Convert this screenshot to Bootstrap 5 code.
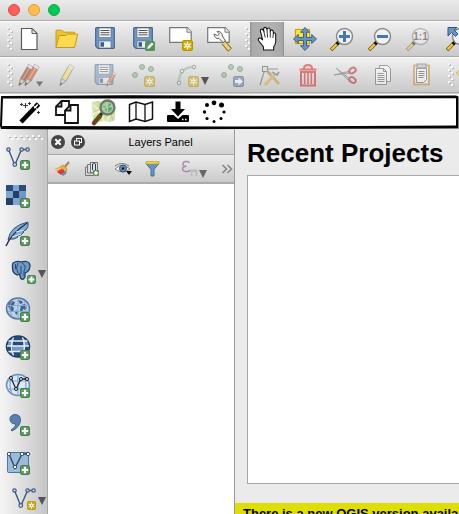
<!DOCTYPE html>
<html lang="en">
<head>
<meta charset="utf-8">
<meta name="viewport" content="width=device-width, initial-scale=1">
<title>QGIS</title>
<link href="https://cdn.jsdelivr.net/npm/bootstrap@5.3.0/dist/css/bootstrap.min.css" rel="stylesheet">
<style>
body { font-family: "Liberation Sans", Arial, sans-serif; background: #ebebeb; color: #000; }
.titlebar { height: 21px; padding-left: 8px; gap: 8px; background: linear-gradient(#ebebeb, #d4d4d4); border-bottom: 1px solid #adadad; }
.light { width: 12px; height: 12px; border: 1px solid; }
.light-close { background: #ff5f5b; border-color: #e2463f; }
.light-min { background: #ffbe4f; border-color: #e1a02f; }
.light-max { background: #00ca56; border-color: #12ac40; }
.toolrow { height: 36px; background: linear-gradient(#f0f0f0, #c9c9c9); border-top: 1px solid #fafafa; border-bottom: 1px solid #a9a9a9; }
.grip { width: 14px; height: 28px; margin-right: -4px; }
.tool { width: 38px; height: 34px; }
.tool-wide { width: 51px; padding-right: 2px !important; }
.tool svg, .side-tool svg, .plug svg, .mini svg { display: block; flex: none; overflow: visible; }
.tool, .side-tool, .plug, .mini, .round { border: 0; padding: 0; background: none; display: flex; align-items: center; justify-content: center; flex: none; }
.tool-on { background: linear-gradient(90deg, #8f8f8f 0, #a9a9a9 2px, #b4b4b4 50%, #a9a9a9 32px, #8f8f8f 34px) center / 34px 100% no-repeat; }
.faded svg { opacity: .5; }
.plugbar { height: 36px; padding: 0 0 0 11px; background: #fff; border-top: 1px solid #ccc; }
.plug { width: 37px; height: 32px; }
.frame { left: 0; top: 1px; width: 100%; height: 35px; pointer-events: none; }
.sidebar { width: 48px; padding-top: 6px; background: linear-gradient(90deg, #f4f4f4, #ededed 8px, #c6c6c6); border-right: 1px solid #a6a6a6; }
.side-tool { width: 47px; height: 38px; justify-content: flex-start; padding-left: 4px; }
.layers { width: 187px; border-right: 1px solid #999; }
.panel-head { height: 26px; padding: 0 4px 0 3px; gap: 6px; background: linear-gradient(#ececec, #d2d2d2); border-bottom: 1px solid #a8a8a8; }
.panel-title { font-size: 11px; line-height: 14px; }
.round { width: 14px; height: 14px; border-radius: 50%; background: #444; }
.panel-tools { height: 29px; background: linear-gradient(#ececec, #cacaca); border-bottom: 2px solid #aaa; }
.mini { width: 30px; height: 26px; }
.mini-wide { width: 48px; }
.mini-more { width: 22px; }
.welcome { padding: 8px 0 0 12px; }
.welcome h1 { font-size: 26px; line-height: 32px; padding-bottom: 6px; font-weight: 700; }
.projects { border: 1px solid #a8a8a8; border-right: 0; margin-bottom: 19px; }
.notice { height: 11px; margin-left: -12px; padding: 3px 0 0 8px; background: #dede00; font-size: 13px; line-height: 16px; }
</style>
<script src="https://cdn.jsdelivr.net/npm/bootstrap@5.3.0/dist/js/bootstrap.bundle.min.js"></script>
</head>
<body class="vh-100 overflow-hidden d-flex flex-column">

<svg class="d-none" aria-hidden="true">
  <symbol id="grip" viewBox="0 0 14 28">
    <g fill="#f8f8f8"><path d="M7 2h2v2H7zM10 5h2v2h-2zM7 8h2v2H7zM10 11h2v2h-2zM7 14h2v2H7zM10 17h2v2h-2zM7 20h2v2H7zM10 23h2v2h-2z"/></g>
    <g fill="#bcbcbc"><path d="M9 3h1v2H8V4h1zM12 6h1v2h-2V7h1zM9 9h1v2H8v-1h1zM12 12h1v2h-2v-1h1zM9 15h1v2H8v-1h1zM12 18h1v2h-2v-1h1zM9 21h1v2H8v-1h1zM12 24h1v2h-2v-1h1z"/></g>
  </symbol>
  <symbol id="plus" viewBox="0 0 10 10"><rect x=".5" y=".5" width="9" height="9" rx="1.5" fill="#5c9a5f" stroke="#468049"/><path d="M5 1.8v6.4M1.8 5h6.4" stroke="#fff" stroke-width="2.2"/></symbol>
  <symbol id="star" viewBox="0 0 11 11"><rect x=".5" y=".5" width="10" height="10" rx="1.5" fill="#d0a800" stroke="#b89200"/><path d="M5.500 1.500v8M2 3.500l7 4M9 3.500l-7 4" stroke="#fff" stroke-width="1.300"/><circle cx="5.500" cy="5.500" r="2" fill="#fff"/><circle cx="5.500" cy="5.500" r=".8" fill="#d0a800"/></symbol>
  <symbol id="disk" viewBox="0 0 20 22"><path d="M1.500.7h17q.8 0 .8.800v19q0 .8-.8.800H3L.7 19V1.500q0-.8.8-.8z" fill="#6f97c7" stroke="#43648d" stroke-width="1.200"/><rect x="4" y="1" width="12" height="9.500" fill="#f8f8f6" stroke="#58687a" stroke-width=".6"/><path d="M5.500 3.500h9M5.500 5.700h9M5.500 7.900h9" stroke="#555"/><rect x="4" y="14" width="12" height="7" fill="#f0f0ee" stroke="#58687a" stroke-width=".6"/><rect x="5.500" y="15.200" width="3.500" height="4.500" fill="#385c8c"/></symbol>
  <symbol id="lens" viewBox="0 0 28 28"><path d="M3 25l8-8" stroke="#5a5030" stroke-width="3.600"/><path d="M3.500 24.500l6-6" stroke="#fbc722" stroke-width="2.400"/><path d="M8.800 19.200l2.400-2.400" stroke="#111" stroke-width="3.400"/><circle cx="16.500" cy="11.500" r="8" fill="#f1f1f1" stroke="#8b8b8b" stroke-width="1.500"/></symbol>
  <symbol id="vee" viewBox="0 0 28 28"><path d="M4.500 4.500l6.300 15.500 6.800-15.500h6" fill="none" stroke="#3c5a80" stroke-width="1.400"/><g fill="#d5e2ef" stroke="#3c5a80" stroke-width="1.200"><circle cx="4.500" cy="4.500" r="1.700"/><circle cx="10.800" cy="19.500" r="1.800"/><circle cx="17.600" cy="4.500" r="1.700"/><circle cx="23.600" cy="4.500" r="1.700"/></g></symbol>
  <symbol id="points" viewBox="0 0 28 28"><g fill="#7fb587" stroke="#4f7f59"><circle cx="6" cy="14" r="2.500"/><circle cx="13" cy="6" r="2.500"/><circle cx="22" cy="8" r="2.500"/></g></symbol>
  <symbol id="pencil" viewBox="0 0 16 24"><path d="M1 22.500l1.500-7L10.500 1.500l4.500 2.600-8 14z" fill="currentColor" stroke="#68604b" stroke-width=".8"/><path d="M10.500 1.500l4.500 2.600-1.300 2.300-4.500-2.600z" fill="#ddd"/><path d="M4.700 16.500l7.500-13" stroke="#fff" stroke-opacity=".35" stroke-width="1.500"/><path d="M1 22.500l1.500-7 4.500 2.600z" fill="#d9d0bd" stroke="#555" stroke-width=".6"/><path d="M1 22.500l.6-3 1.900 1.100z" fill="#222"/></symbol>
  <symbol id="page" viewBox="0 0 24 16"><path d="M.7.7h17.500l4 4v10.600H.7z" fill="#fff" stroke="#777" stroke-width="1.200"/><path d="M18 .7v4.500h4.500" fill="#eee" stroke="#777"/></symbol>
</svg>

<header class="titlebar d-flex align-items-center flex-shrink-0">
  <button class="light light-close rounded-circle p-0" aria-label="Close window"></button>
  <button class="light light-min rounded-circle p-0" aria-label="Minimize window"></button>
  <button class="light light-max rounded-circle p-0" aria-label="Zoom window"></button>
</header>

<div class="toolrow d-flex align-items-center flex-shrink-0 overflow-hidden" role="toolbar" aria-label="Project and map navigation">
  <svg class="grip flex-shrink-0"><use href="#grip"/></svg>
  <button class="tool" aria-label="New project"><svg width="28" height="28"><path d="M6.500 3.500H17l5 5v16H6.500z" fill="#fff" stroke="#5b5b5b" stroke-width="1.200"/><path d="M17 3.500v5h5z" fill="#e8e8e8" stroke="#5b5b5b"/></svg></button>
  <button class="tool" aria-label="Open project"><svg width="28" height="28"><path d="M3 22V6q0-.8.800-.8h5l2 2h10q1 0 1 1V11" fill="#eec331" stroke="#c69a17"/><path d="M3 22.500L6 10.500h7l1.500-1.500h9.500q.8 0 .6.800L21.500 22.500z" fill="#fcd94f" stroke="#c69a17"/></svg></button>
  <button class="tool" aria-label="Save project"><svg width="28" height="28"><use href="#disk" x="4" y="2" width="20" height="22"/></svg></button>
  <button class="tool" aria-label="Save project as"><svg width="28" height="28"><use href="#disk" x="4" y="2" width="20" height="22"/><rect x="16" y="16" width="10" height="10" rx="1.500" fill="#589060"/><path d="M18.200 24l.6-2.500 4-4 1.700 1.700-4 4z" fill="#fff"/></svg></button>
  <button class="tool" aria-label="New print composer"><svg width="28" height="28"><use href="#page" x="2" y="2" width="24" height="16"/><use href="#star" x="15" y="15" width="11" height="11"/></svg></button>
  <button class="tool" aria-label="Composer manager"><svg width="28" height="28"><use href="#page" x="2" y="2" width="24" height="16"/><path d="M18.500 17.500l6.500 7.500" stroke="#7e6b32" stroke-width="5"/><path d="M18.500 17.500l6 7" stroke="#efd16c" stroke-width="3.400"/><path d="M12 6.500q5-.5 5.500 4.500l3 5-2.500 1.500-4-4q-4.500.5-5-4.500l3.500 1.500 2-1.500z" fill="#eee" stroke="#666"/></svg></button>
  <svg class="grip flex-shrink-0"><use href="#grip"/></svg>
  <button class="tool tool-on" aria-label="Pan map" aria-pressed="true"><svg width="28" height="28"><path d="M10.500 25v-3l-5-6.500q-.8-1.800.8-2.400 1.600-.3 3.400 2L7.300 6q-.2-1.500 1-1.800t1.900 1.100l.6.700-.2-2q.1-1.600 1.500-1.600T13.700 4l.3.300q.3-1.300 1.600-1.300t1.600 1.500l.1 1.300q.5-.9 1.600-.7t1.500 1.500v1.400q.6-.5 1.400-.1t.9 1.700V17q-.4 3-2 4.700V25z" fill="#fff" stroke="#161616" stroke-width="1.100"/><path d="M10.700 6l1.500 6.500M13.900 4.500l.7 8M17.300 6v6.500M20.400 8l-.5 5" stroke="#222" stroke-width=".9"/></svg></button>
  <button class="tool" aria-label="Pan map to selection"><svg width="28" height="28"><rect x="4.500" y="4.500" width="14" height="14" fill="#ffe23a" stroke="#d0a500" stroke-width="1.200"/><path d="M14 2.500l4.500 4.800h-3v5.200h5.200v-3l4.800 4.500-4.800 4.500v-3h-5.200v5.200h3L14 25.500l-4.500-4.800h3v-5.200H7.300v3L2.500 14l4.800-4.500v3h5.200V7.300h-3z" fill="#6295cb" stroke="#34577f" stroke-width=".9"/></svg></button>
  <button class="tool" aria-label="Zoom in"><svg width="28" height="28"><use href="#lens" x="-1"/><path d="M15.500 6v11M10 11.500h11" stroke="#4277b5" stroke-width="3"/></svg></button>
  <button class="tool" aria-label="Zoom out"><svg width="28" height="28"><use href="#lens" x="-1"/><path d="M10 11.500h11" stroke="#4277b5" stroke-width="3"/></svg></button>
  <button class="tool faded" aria-label="Zoom to native resolution"><svg width="28" height="28"><use href="#lens" x="-1"/><text x="15.500" y="15" text-anchor="middle" font-size="10" font-weight="700" fill="#333">1:1</text></svg></button>
  <button class="tool" aria-label="Zoom full"><svg width="28" height="28"><use href="#lens" x="1"/><path d="M5 2.500h9l-3 2.500 4 4-2.500 2.500-4-4L5 11z" fill="#6295cb" stroke="#34577f"/></svg></button>
</div>

<div class="toolrow d-flex align-items-center flex-shrink-0 overflow-hidden" role="toolbar" aria-label="Digitizing">
  <svg class="grip flex-shrink-0"><use href="#grip"/></svg>
  <button class="tool" aria-label="Current edits"><svg width="28" height="28"><g opacity=".6"><use href="#pencil" x="3" y="2" width="16" height="24" color="#a63c1e"/><use href="#pencil" x="9" y="2" width="16" height="24" color="#dc5426"/></g><path d="M21 20.500h7l-3.500 5z" fill="#777"/></svg></button>
  <button class="tool faded" aria-label="Toggle editing"><svg width="28" height="28"><use href="#pencil" x="5" y="2" width="18" height="24" color="#f0dc48"/></svg></button>
  <button class="tool faded" aria-label="Save layer edits"><svg width="28" height="28"><use href="#disk" x="3" y="3" width="20" height="21"/><use href="#pencil" x="15" y="10" width="11" height="16" color="#df5a20"/></svg></button>
  <button class="tool faded" aria-label="Add feature"><svg width="28" height="28"><use href="#points"/><use href="#star" x="15" y="15" width="11" height="11"/></svg></button>
  <button class="tool tool-wide" aria-label="Add circular string"><svg width="28" height="28"><g opacity=".5"><path d="M6 22Q6 6 21 6" fill="none" stroke="#88bb91" stroke-width="2.500"/><g fill="#eee" stroke="#666"><circle cx="6" cy="22" r="1.800"/><circle cx="9" cy="10" r="1.800"/><circle cx="21" cy="6" r="1.800"/></g><use href="#star" x="15" y="15" width="11" height="11"/></g><path d="M28 16h8l-4 8z" fill="#555"/></svg></button>
  <button class="tool faded" aria-label="Move feature"><svg width="28" height="28"><use href="#points"/><rect x="15.500" y="15.500" width="10" height="10" rx="1.500" fill="#587ba0" stroke="#36587e"/><path d="M17 19h3.500v-2.500L25 20.500l-4.500 4V22H17z" fill="#fff"/></svg></button>
  <button class="tool faded" aria-label="Node tool"><svg width="28" height="28"><path d="M4 24L9 8h13" fill="none" stroke="#555" stroke-width="1.200"/><rect x="6.500" y="5.500" width="5" height="5" fill="#ddd" stroke="#444"/><path d="M11 10l12 13" stroke="#c3922a" stroke-width="3"/><path d="M9 24l10-11" stroke="#d5a638" stroke-width="3"/><path d="M16 11l5 3 2-3" fill="none" stroke="#666" stroke-width="2"/><path d="M11 9l4 5" stroke="#777" stroke-width="1.500"/></svg></button>
  <button class="tool faded" aria-label="Delete selected"><svg width="28" height="28" fill="none" stroke="#d5130e"><path d="M5.500 8.500h17M10 7.500q0-3.500 4-3.500t4 3.500" stroke-width="2"/><path d="M7 11v13.500h14V11z" stroke-width="2"/><path d="M10.700 12v11M14 12v11M17.300 12v11" stroke-width="1.600"/></svg></button>
  <button class="tool faded" aria-label="Cut features"><svg width="28" height="28"><path d="M4 7l14 11-2 1zM2 14l16-4v2z" fill="#aaa" stroke="#555" stroke-width=".8"/><g fill="none" stroke="#b21c1c" stroke-width="2"><ellipse cx="20.500" cy="9.500" rx="3.500" ry="2.500" transform="rotate(-30 20.500 9.500)"/><ellipse cx="20.500" cy="19" rx="3.500" ry="2.500" transform="rotate(35 20.500 19)"/></g></svg></button>
  <button class="tool faded" aria-label="Copy features"><svg width="28" height="28" fill="#fff" stroke="#555"><path d="M9.500 4.500h8l3 3v13h-11z"/><path d="M5.500 7.500h8l3 3v13h-11z"/><path d="M13.500 7.500v3h3M7.500 12.500h6M7.500 14.500h7M7.500 16.500h7M7.500 18.500h7M7.500 20.500h7" fill="none"/></svg></button>
  <button class="tool faded" aria-label="Paste features"><svg width="28" height="28"><rect x="6" y="4.500" width="15" height="19" fill="#eee" stroke="#bd8320" stroke-width="1.800"/><path d="M8.500 7.500h10v11l-3 3h-7z" fill="#fff" stroke="#555"/><rect x="9" y="3" width="9" height="4" fill="#bbb" stroke="#666"/><path d="M10.500 10.500h6M10.500 12.500h6M10.500 14.500h6M10.500 16.500h5" stroke="#444"/></svg></button>
  <svg class="grip flex-shrink-0"><use href="#grip"/></svg>
  <button class="tool faded" aria-label="Labels"><svg width="28" height="28"><path d="M0 12l6-5h18v10H6z" fill="#f5d33c" stroke="#b89200"/></svg></button>
</div>

<div class="plugbar position-relative d-flex align-items-center flex-shrink-0" role="toolbar" aria-label="Plugins">
  <svg class="frame position-absolute" viewBox="0 0 459 35" preserveAspectRatio="none"><path d="M1 1L130 .3l130 .4 196-.2 2.500 1V33.500l-220 .5-120 .8L1 34 0 31zM3 3.500L2 31l230 .5 224-1V3.300L230 3.600z" fill="#050505" fill-rule="evenodd"/></svg>
  <button class="plug" aria-label="Quick wizard"><svg width="24" height="24"><path d="M3 22L17 7.500" stroke="#000" stroke-width="4.600"/><path d="M17.500 7l3-3" stroke="#000" stroke-width="5"/><path d="M16.300 8.200l3.500-3.700" stroke="#fff" stroke-width="1.500"/><path d="M7.500 3v5M5 5.500h5M3.500 3v3M2 4.500h3M11.500 2v3M10 3.500h3M20.500 11v3M19 12.500h3" stroke="#222" stroke-width=".9"/></svg></button>
  <button class="plug" aria-label="Duplicate"><svg width="26" height="26" fill="#fff" stroke="#111" stroke-width="1.800"><path d="M7.500 2H15v14H2V7.500z"/><path d="M7.500 2v5.500H2" fill="none"/><path d="M16.500 6H24v18H11V11.500z"/><path d="M16.500 6v5.500H11" fill="none"/></svg></button>
  <button class="plug" aria-label="OpenStreetMap search"><svg width="26" height="26"><path d="M1 3l6-1 6 1 6-1 5 1v18l-5 2-6-1-6 1-5-2z" fill="#c8e6a8"/><path d="M2 6l8 7 3 9M1 16l11-6 4-8M16 22l3-8 5-2" fill="none" stroke="#f6edc5" stroke-width="2"/><path d="M7 2l3 7-6 4M20 15l2 7" fill="none" stroke="#e6b39a"/><path d="M9 17l-6 7" stroke="#67491b" stroke-width="4.500" stroke-linecap="round"/><path d="M12 13l-2.500 3" stroke="#333" stroke-width="3"/><circle cx="16.500" cy="8.500" r="7" fill="#9fca94" stroke="#6d7a6e" stroke-width="2.300"/><path d="M12 7l4 1 3-4 2 6-4 4z" fill="#5faa6a"/><path d="M11 10l10-3M15 3l2 11" stroke="#bbdaca"/></svg></button>
  <button class="plug" aria-label="Map"><svg width="26" height="26" fill="none" stroke="#111" stroke-width="1.500"><path d="M1.500 5.500L8 3l9 2.500L24.500 3v17L17 22.500 8 20l-6.500 2.500z"/><path d="M8 3v17M17 5.500v17" stroke-width="1.300"/></svg></button>
  <button class="plug" aria-label="Download"><svg width="24" height="24"><path d="M9.500 1.500h5V9h4.500l-7 7.500L5 9h4.500z"/><path d="M2 15h5.500l4.500 4 4.500-4H22q1 0 1 1v5q0 1-1 1H2q-1 0-1-1v-5q0-1 1-1z"/><path d="M16 19.500h1.500M19 19.500h1.500" stroke="#fff" stroke-width="1.500"/></svg></button>
  <button class="plug" aria-label="Loading"><svg width="24" height="24"><circle cx="11" cy="2.800" r="2.400"/><circle cx="18.500" cy="5" r="2.500"/><circle cx="21" cy="12" r="1.600"/><circle cx="18" cy="18.500" r="1.500"/><circle cx="11" cy="21.500" r="1.500"/><circle cx="4" cy="18.500" r="1.600"/><circle cx="1.500" cy="12" r="1.700"/><circle cx="4" cy="5" r="2"/></svg></button>
</div>

<main class="d-flex flex-fill overflow-hidden">
  <nav class="sidebar flex-shrink-0 overflow-hidden" aria-label="Manage layers">
    <svg class="d-block ms-2" width="36" height="5"><path d="M0 1h35" stroke="#f8f8f8" stroke-width="2" stroke-dasharray="2 4"/><path d="M3 4h32" stroke="#f8f8f8" stroke-width="2" stroke-dasharray="2 4"/><path d="M1 2.500h35" stroke="#aaa" stroke-dasharray="2 4"/></svg>
    <button class="side-tool" aria-label="Add vector layer"><svg width="28" height="28"><use href="#vee"/><use href="#plus" x="16" y="15" width="10" height="10"/></svg></button>
    <button class="side-tool" aria-label="Add raster layer"><svg width="28" height="28"><rect x="2" y="2" width="20" height="20" fill="#6e97c6"/><path d="M2 2h7v6H2zM15 2h7v6h-7zM9 8h6v7H9zM2 15h7v7H2z" fill="#233f63"/><path d="M9 2h6v6H9zM2 8h7v7H2zM9 15h6v7H9z" fill="#7ca5d4"/><path d="M15 2h7v6h-7zM2 2h7v6H2z" fill="#2b4c76"/><use href="#plus" x="16" y="15" width="10" height="10"/></svg></button>
    <button class="side-tool" aria-label="Add SpatiaLite layer"><svg width="28" height="28"><path d="M4 19Q6 5 24 1q1 5-2 8l-3 1 1 1q-3 4-7 4l1 1q-4 3-8 2z" fill="#80a9d3" stroke="#3b5676"/><path d="M2 25Q7 13 23 2" fill="none" stroke="#25384e" stroke-width="1.500"/><path d="M8 16l9-3M12 11l8-2" stroke="#e5eff8"/><use href="#plus" x="16" y="15" width="10" height="10"/></svg></button>
    <button class="side-tool" aria-label="Add PostGIS layer"><svg width="28" height="28"><path d="M9 4q4-2.500 8-1 8-2 9 3 0 5-3 7l-2 1v4q-2 4-4.500 1l-1-4-2.500 1q-4.500-2-4.500-7Q8 6 9 4z" fill="#6e9ac8" stroke="#234061" stroke-width="1.300"/><path d="M14 4q-3 5 0 10M18 4q5 3 2 8v5M11.500 5v5M17 7v8" fill="none" stroke="#294b72"/><use href="#plus" x="23" y="16" width="9" height="9"/><path d="M34 11h8l-4 8z" fill="#555"/></svg></button>
    <button class="side-tool" aria-label="Add WMS layer"><svg width="28" height="28"><ellipse cx="14" cy="11.500" rx="11.500" ry="10.500" fill="#b8d1e8" stroke="#587aa1" stroke-width="1.500"/><path d="M5 6l3-2 3 1-1 3-2 1 2 2-1 4-3-2-2-4zM14 3l4 1 1 2-3 1zM17 8l4-1 2 4-2 2-2-1-1 5-2-4zM12 13l2 2-1 3-2-2z" fill="#45648a"/><path d="M3 8.500h22M4 14.500h21M14 1.500v20M8 3.500q-4 8 0 16M20 3.500q4 8 0 16" fill="none" stroke="#86a9cf"/><use href="#plus" x="16" y="15" width="10" height="10"/></svg></button>
    <button class="side-tool" aria-label="Add WCS layer"><svg width="28" height="28"><ellipse cx="14" cy="11.500" rx="11.500" ry="10.500" fill="#6f9ac9" stroke="#1d3a5e" stroke-width="1.500"/><path d="M9.500 2h9L20 6H8zM3 11h6v5H4zM20 11h5l-1 5h-4zM9 6h10v5H9zM9 16.500h10l-1 4.500h-8z" fill="#274a76"/><path d="M3 11h22M4.500 6h19M4.500 16.500h19M9.500 2.500q-4 9 0 18M18.500 2.500q4 9 0 18" fill="none" stroke="#e6eef7" stroke-width="1.300"/><use href="#plus" x="16" y="15" width="10" height="10"/></svg></button>
    <button class="side-tool" aria-label="Add WFS layer"><svg width="28" height="28"><ellipse cx="14" cy="12" rx="11.500" ry="10.500" fill="#dce9f5" stroke="#6a94c2" stroke-width="1.500"/><path d="M3 8h22M3 16h22M14 2v20M8 3q-4 9 0 18M20 3q4 9 0 18" fill="none" stroke="#7da5d1" stroke-width="1.200"/><path d="M7 5l5 11 5-10h6" fill="none" stroke="#1d2938" stroke-width="1.300"/><g fill="#fff" stroke="#111"><circle cx="7" cy="5" r="1.500"/><circle cx="12" cy="16" r="1.500"/><circle cx="17" cy="6" r="1.500"/><circle cx="23" cy="6" r="1.500"/></g><use href="#plus" x="16" y="15" width="10" height="10"/></svg></button>
    <button class="side-tool" aria-label="Add delimited text layer"><svg width="28" height="28"><path d="M7 19q5-3 5-6-6 0-6-5 0-4 5-4.500 5.500 0 5.500 6Q16 16 8 20z" fill="#587fad" stroke="#3f638d"/><use href="#plus" x="16" y="15" width="10" height="10"/></svg></button>
    <button class="side-tool" aria-label="Add virtual layer"><svg width="28" height="28"><rect x="3.500" y="3.500" width="21" height="20" rx="1" fill="#9cbada" stroke="#527599"/><path d="M5 5l6 14 7-14h6" fill="none" stroke="#34516f" stroke-width="1.500"/><g fill="#fff" stroke="#34516f"><circle cx="5" cy="5" r="1.700"/><circle cx="11" cy="18" r="1.700"/><circle cx="18" cy="5" r="1.700"/><circle cx="24" cy="5" r="1.700"/></g><use href="#plus" x="16" y="16" width="10" height="10"/></svg></button>
    <button class="side-tool" aria-label="New vector layer"><svg width="28" height="28"><use href="#vee" x="6" y="-1" width="28" height="28"/><use href="#star" x="23" y="14" width="9" height="9"/><path d="M34 10h8l-4 8z" fill="#555"/></svg></button>
  </nav>

  <section class="layers d-flex flex-column flex-shrink-0 bg-white" aria-labelledby="layers-title">
    <div class="panel-head d-flex align-items-center">
      <button class="round" aria-label="Close panel"><svg width="14" height="14"><path d="M4.300 4.300l5.400 5.400M9.700 4.300L4.300 9.700" stroke="#fff" stroke-width="2"/></svg></button>
      <button class="round" aria-label="Float panel"><svg width="14" height="14" fill="#444" stroke="#fff"><rect x="5.500" y="3.500" width="5" height="4"/><rect x="3.500" y="6" width="5" height="4"/></svg></button>
      <div id="layers-title" class="panel-title flex-fill text-center">Layers Panel</div>
    </div>
    <div class="panel-tools d-flex align-items-center overflow-hidden">
      <button class="mini" aria-label="Style layers"><svg width="18" height="18"><path d="M10 8l5-6" stroke="#a58a58" stroke-width="2.200"/><path d="M6 7l3-2 4 4-1 4z" fill="#e7b43b" stroke="#b0812b" stroke-width=".6"/><path d="M1 9l5-2 3 3-5 2z" fill="#f26b49"/><path d="M3 12l6-3 2 3-4 3z" fill="#e33535"/><path d="M7 14l5-3v3l-3 2z" fill="#6089ca"/><path d="M2 10l5-2" stroke="#f9df4c" stroke-width="1.500"/></svg></button>
      <button class="mini" aria-label="Add group"><svg width="18" height="18" fill="none" stroke="#777"><path d="M3 7H1.500v8.500H9M6 4.500H3.500v8.500H10"/><rect x="6.500" y="2.500" width="7" height="10" fill="#ddd"/><path d="M8.500 10V4q1.500-2 3 0v6" stroke="#345"/><use href="#plus" x="9" y="10" width="6" height="6" stroke="none"/></svg></button>
      <button class="mini" aria-label="Manage layer visibility"><svg width="18" height="18"><path d="M1 9q7-7 15 0-7 6-15 0z" fill="#f4f4f4" stroke="#888"/><path d="M1 6q7-5 14 0" fill="none" stroke="#777"/><circle cx="9" cy="8.500" r="3.500" fill="#6690be" stroke="#34506d"/><circle cx="9" cy="8.500" r="1.300" fill="#112"/><path d="M12 11h6l-3 4z" fill="#111"/></svg></button>
      <button class="mini" aria-label="Filter legend"><svg width="18" height="18"><path d="M2 3.500h13l-5 6V16H7V9.500z" fill="#6594c6" stroke="#476f99"/><path d="M2 1.500h13v2.500H2z" fill="#f2cd3c" stroke="#b89b35" stroke-width=".6"/></svg></button>
      <button class="mini mini-wide" aria-label="Filter legend by expression"><svg width="28" height="20"><path d="M11.500 4q-1-2-4-1.500T5 5.500q.3 2 3.500 1.800Q4.500 7.500 4.500 10q.3 2.500 3.700 2.500T12 11" fill="none" stroke="#a98bb0" stroke-width="1.500"/><path d="M12.500 10.500h7v2l-.5 4.500h-1.500v-4h-3v4H13z" fill="#bbb"/><path d="M21 11h8l-4 8z" fill="#666"/></svg></button>
      <button class="mini mini-more" aria-label="More"><svg width="12" height="12" fill="none" stroke="#888" stroke-width="1.600"><path d="M1.500 2l4 4-4 4M6.500 2l4 4-4 4"/></svg></button>
    </div>
  </section>

  <section class="welcome flex-fill d-flex flex-column overflow-hidden">
    <h1 class="m-0 text-nowrap">Recent Projects</h1>
    <div class="projects flex-fill bg-white"></div>
    <div class="notice fw-bold text-nowrap overflow-hidden flex-shrink-0">There is a new QGIS version available</div>
  </section>
</main>
</body>
</html>
